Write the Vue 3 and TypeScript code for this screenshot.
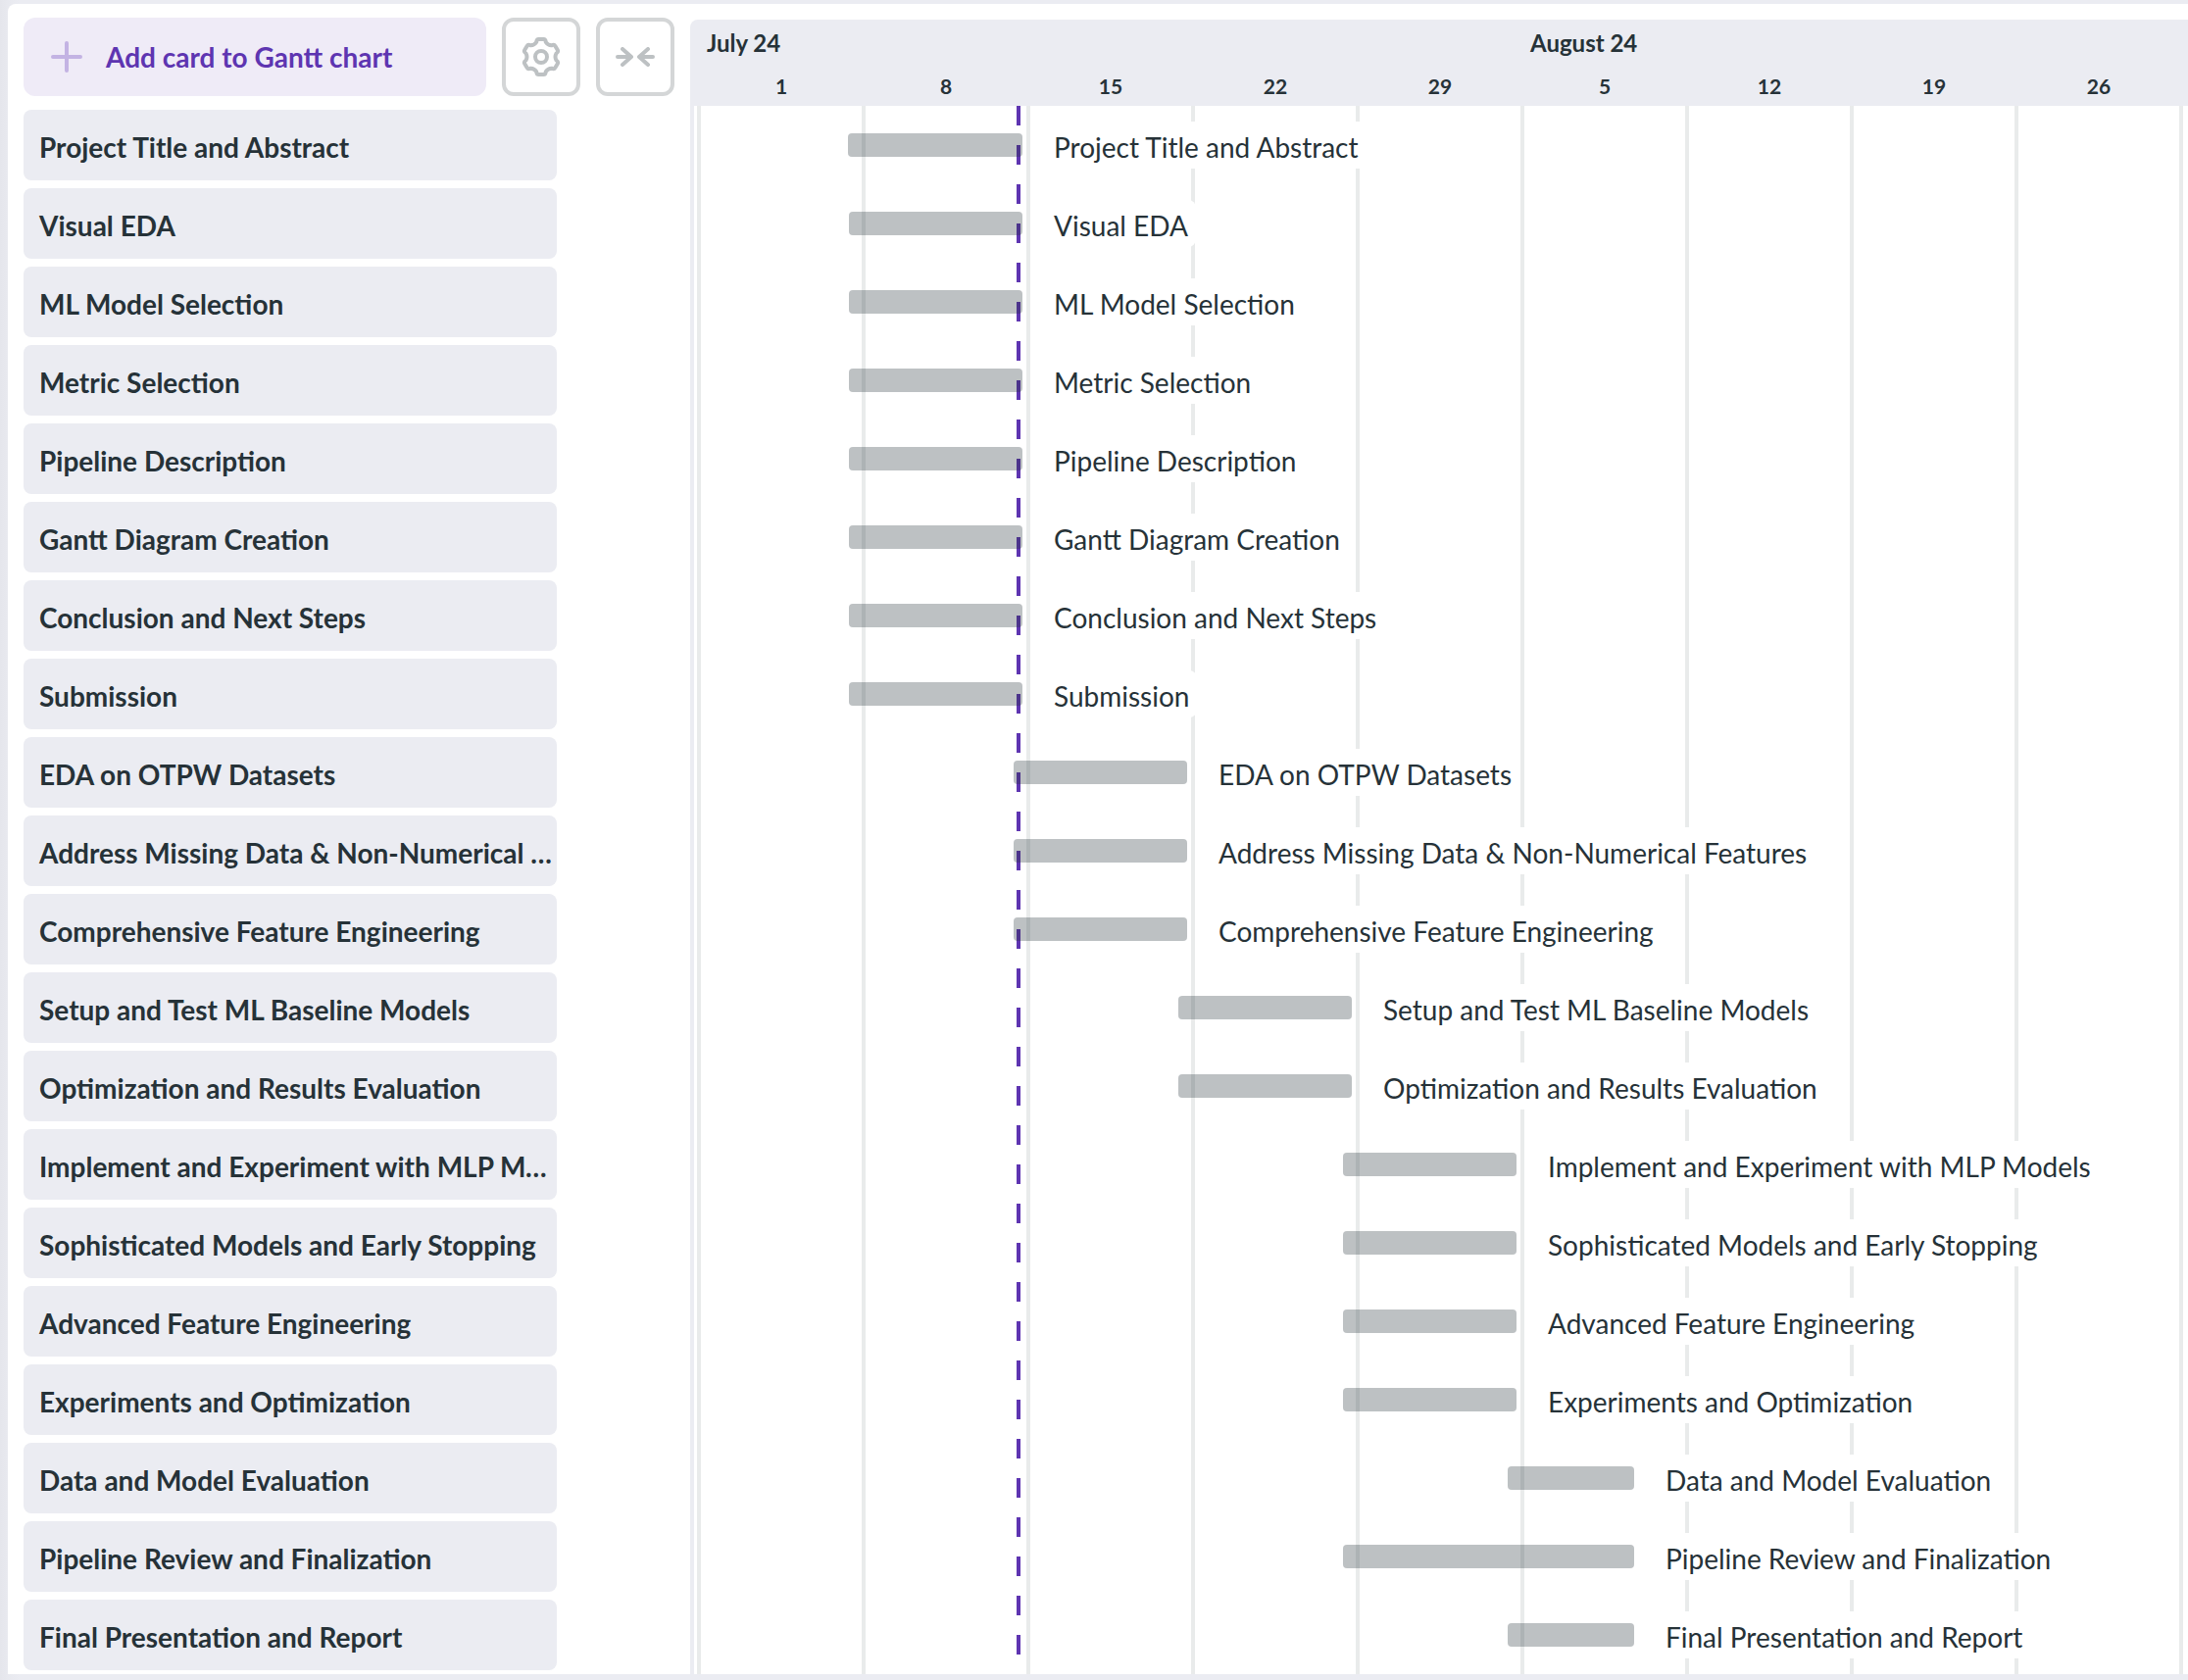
<script setup lang="ts">
interface Task {
  name: string
  start: number
  end: number
}

const tasks: Task[] = [
  { name: 'Project Title and Abstract', start: 865, end: 1043 },
  { name: 'Visual EDA', start: 866, end: 1043 },
  { name: 'ML Model Selection', start: 866, end: 1043 },
  { name: 'Metric Selection', start: 866, end: 1043 },
  { name: 'Pipeline Description', start: 866, end: 1043 },
  { name: 'Gantt Diagram Creation', start: 866, end: 1043 },
  { name: 'Conclusion and Next Steps', start: 866, end: 1043 },
  { name: 'Submission', start: 866, end: 1043 },
  { name: 'EDA on OTPW Datasets', start: 1034, end: 1211 },
  { name: 'Address Missing Data & Non-Numerical Features', start: 1034, end: 1211 },
  { name: 'Comprehensive Feature Engineering', start: 1034, end: 1211 },
  { name: 'Setup and Test ML Baseline Models', start: 1202, end: 1379 },
  { name: 'Optimization and Results Evaluation', start: 1202, end: 1379 },
  { name: 'Implement and Experiment with MLP Models', start: 1370, end: 1547 },
  { name: 'Sophisticated Models and Early Stopping', start: 1370, end: 1547 },
  { name: 'Advanced Feature Engineering', start: 1370, end: 1547 },
  { name: 'Experiments and Optimization', start: 1370, end: 1547 },
  { name: 'Data and Model Evaluation', start: 1538, end: 1667 },
  { name: 'Pipeline Review and Finalization', start: 1370, end: 1667 },
  { name: 'Final Presentation and Report', start: 1538, end: 1667 },
]

const months = [
  { label: 'July 24', weeks: [1, 8, 15, 22, 29] },
  { label: 'August 24', weeks: [5, 12, 19, 26] },
]

// Left edge of the chart's scrolling body
const origin = 708

// Gear outline: one tooth and the valley after it, repeated every 60 degrees
function gearPath(): string {
  const parts: string[] = []
  for (let i = 0; i < 6; i++) {
    const a = (i * Math.PI) / 3
    const p = (x: number, y: number) =>
      `${(x * Math.cos(a) - y * Math.sin(a)).toFixed(2)} ${(x * Math.sin(a) + y * Math.cos(a)).toFixed(2)}`
    parts.push(
      `${i === 0 ? 'M' : 'L'}${p(-4.8, -15)}`,
      `Q${p(-4.6, -18)} ${p(-2.4, -18)}`,
      `L${p(2.4, -18)}`,
      `Q${p(4.6, -18)} ${p(4.8, -15)}`,
      `Q${p(6.8, -11.8)} ${p(10.59, -11.66)}`,
    )
  }
  return parts.join('') + 'Z'
}
const gear = gearPath()
</script>

<template>
  <div class="page">
    <main class="panel">
      <aside class="sidebar">
        <div class="toolbar">
          <button class="add">
            <svg width="32" height="32" viewBox="0 0 32 32" fill="none" stroke="#c3b3e3" stroke-width="4" stroke-linecap="round">
              <path d="M16 2v28M2 16h28" />
            </svg>
            <span>Add card to Gantt chart</span>
          </button>
          <button class="tool" aria-label="Settings">
            <svg width="40" height="42" viewBox="-20 -21 40 42" fill="none" stroke="#bdc1c3" stroke-width="4" stroke-linejoin="round">
              <path :d="gear" />
              <circle r="6" />
            </svg>
          </button>
          <button class="tool" aria-label="Collapse">
            <svg width="40" height="20" viewBox="0 0 40 20" fill="none" stroke="#bdc1c3" stroke-width="4" stroke-linecap="round" stroke-linejoin="round">
              <path d="M2 10H16M7 2L16 10L7 18M38 10H24M33 2L24 10L33 18" />
            </svg>
          </button>
        </div>
        <ul class="cards">
          <li v-for="task in tasks" :key="task.name" class="card">{{ task.name }}</li>
        </ul>
      </aside>

      <section class="timeline">
        <header class="scale">
          <div v-for="month in months" :key="month.label" class="month">
            <div class="month-name">{{ month.label }}</div>
            <div class="weeks">
              <span v-for="week in month.weeks" :key="week" class="week">{{ week }}</span>
            </div>
          </div>
        </header>
        <div class="body">
          <div class="today"></div>
          <div v-for="task in tasks" :key="task.name" class="row" :style="{ paddingLeft: task.start - origin + 'px' }">
            <div class="bar" :style="{ width: task.end - task.start + 'px' }"></div>
            <div class="label">{{ task.name }}</div>
          </div>
        </div>
      </section>
    </main>
  </div>
</template>

<style>
body {
  margin: 0;
  background: #ebecf2;
}
</style>

<style scoped>
.page {
  box-sizing: border-box;
  width: 2232px;
  height: 1714px;
  padding: 4px 0 6px 8px;
  overflow: hidden;
  background: linear-gradient(90deg, #e5e6ec 0, #e8e9ef 8px, #ebecf2 20px);
  font-family: Lato, sans-serif;
  color: #263238;
}

.panel {
  display: flex;
  box-sizing: border-box;
  height: 1704px;
  overflow: hidden;
  background: #fff;
  border-radius: 8px 0 0 0;
}

.sidebar {
  flex: none;
  box-sizing: border-box;
  width: 696px;
  padding: 14px 0 0 16px;
}

.toolbar {
  display: flex;
  gap: 16px;
  margin-bottom: 14px;
}

button {
  display: flex;
  align-items: center;
  box-sizing: border-box;
  height: 80px;
  margin: 0;
  border: 0;
  border-radius: 12px;
  font: inherit;
}

.add {
  width: 472px;
  padding: 0 28px;
  gap: 24px;
  background: #efebf7;
  color: #5e35b1;
  font-size: 28px;
  font-weight: 700;
}

.tool {
  justify-content: center;
  width: 80px;
  padding: 0;
  border: 4px solid #d4d6d7;
  background: #fff;
}

.cards {
  margin: 0;
  padding: 0;
  list-style: none;
}

.card {
  box-sizing: border-box;
  width: 544px;
  height: 72px;
  margin-bottom: 8px;
  padding: 0 4px 0 16px;
  overflow: hidden;
  background: #ebecf2;
  border-radius: 8px;
  font-size: 28px;
  font-weight: 700;
  line-height: 76px;
  text-overflow: ellipsis;
  white-space: nowrap;
}

.timeline {
  flex: 1;
  min-width: 0;
  margin-top: 16px;
  overflow: hidden;
  background: #ebecf2;
  border-radius: 8px 0 0 0;
}

.scale {
  display: flex;
  height: 88px;
  padding-left: 9px;
}

.month-name {
  height: 50px;
  padding-left: 8px;
  font-size: 24px;
  font-weight: 700;
  line-height: 47px;
}

.weeks {
  display: flex;
}

.week {
  width: 168px;
  font-size: 21px;
  font-weight: 700;
  line-height: 35px;
  text-align: center;
}

.body {
  position: relative;
  height: 1600px;
  margin-left: 4px;
  background: repeating-linear-gradient(90deg, #e9ebeb 0 4px, #fff 4px 168px) 3px 0 no-repeat #fff;
}

.today {
  position: absolute;
  top: 0;
  left: 329px;
  width: 4px;
  height: 1580px;
  background: repeating-linear-gradient(#5e35b1 0 20px, transparent 20px 40px);
}

.row {
  position: relative;
  display: flex;
  align-items: flex-start;
  box-sizing: border-box;
  height: 80px;
  padding-top: 16px;
}

.bar {
  flex: none;
  height: 24px;
  margin-top: 12px;
  background: rgba(38, 50, 56, 0.3);
  border-radius: 4px;
}

.label {
  height: 48px;
  margin-left: 24px;
  padding: 0 8px;
  background: #fff;
  border-radius: 8px;
  font-size: 28px;
  line-height: 52px;
  white-space: nowrap;
}
</style>
